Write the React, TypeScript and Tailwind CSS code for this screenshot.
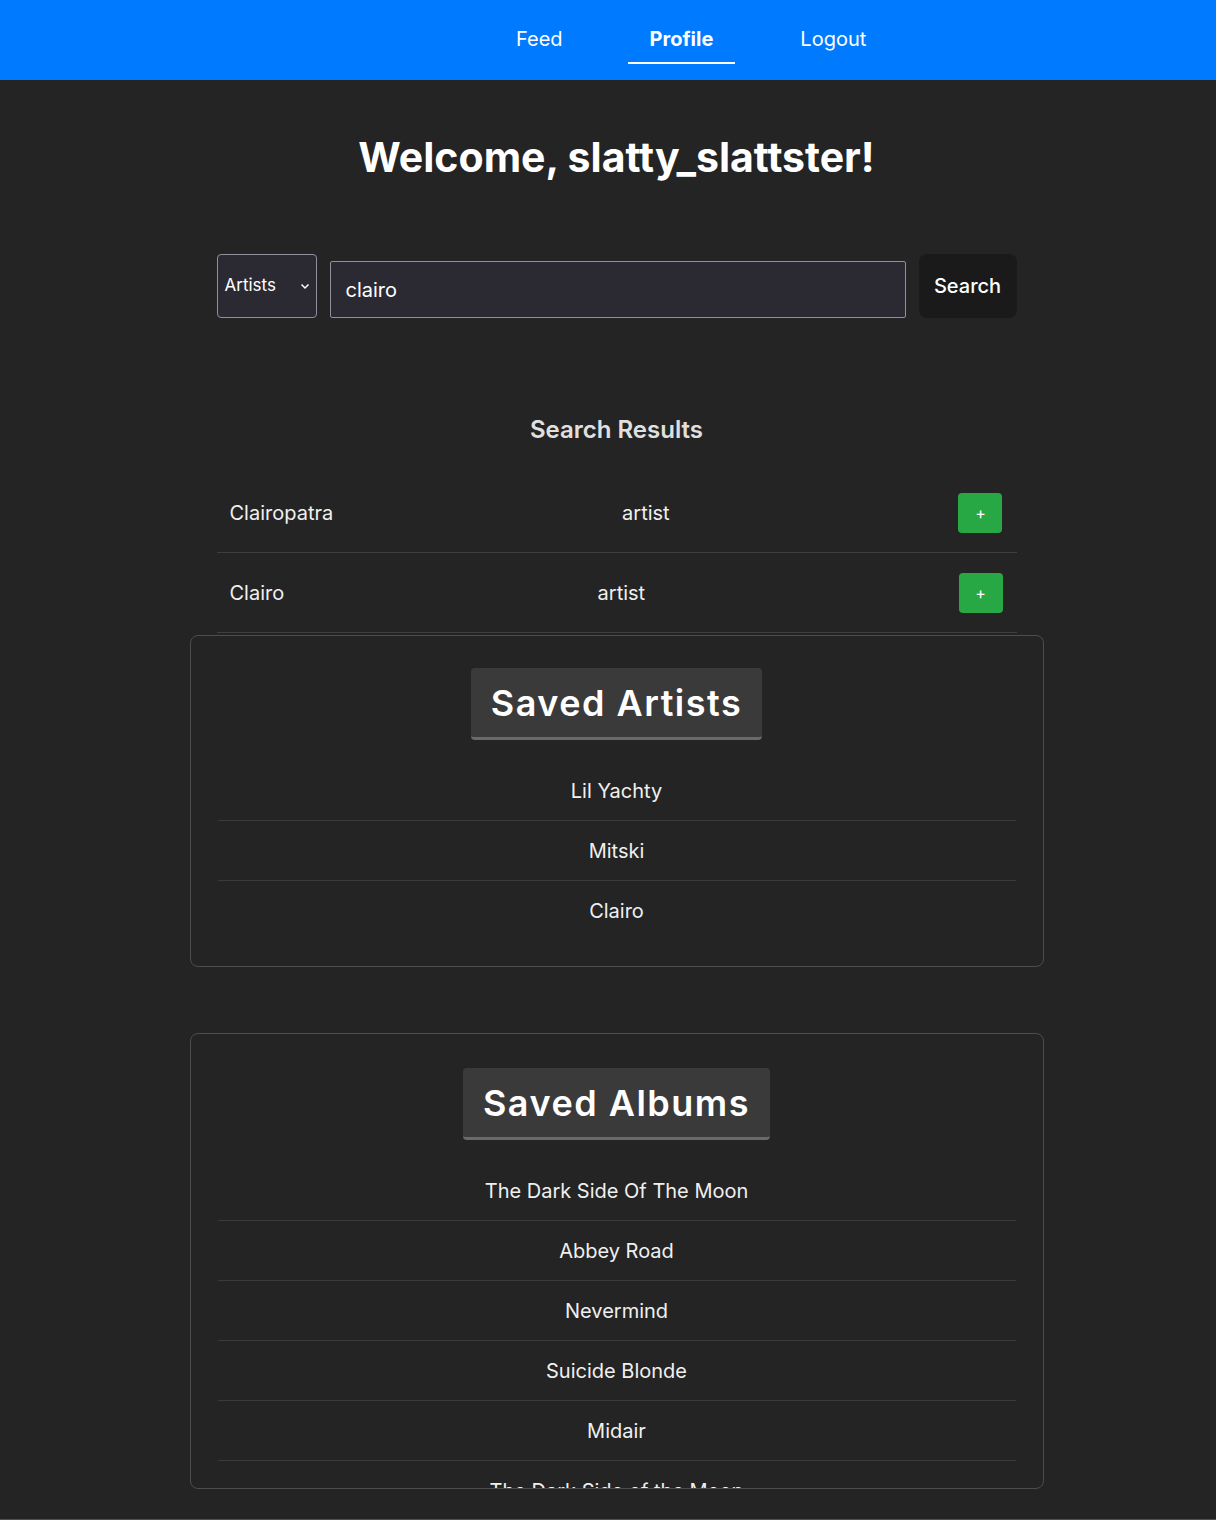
import { FC } from "react";

const results = [
  { name: "Clairopatra", type: "artist" },
  { name: "Clairo", type: "artist" },
];

const savedArtists = ["Lil Yachty", "Mitski", "Clairo"];

const savedAlbums = [
  "The Dark Side Of The Moon",
  "Abbey Road",
  "Nevermind",
  "Suicide Blonde",
  "Midair",
  "The Dark Side of the Moon",
  "Blonde",
];

const NavBar: FC = () => (
  <nav className="h-20 bg-[#007bff] flex items-start pt-4 pl-[494px] gap-[43px] text-[20px] text-white">
    <a className="h-12 px-[22px] flex items-center border-b-2 border-transparent">Feed</a>
    <a className="h-12 px-[22px] flex items-center border-b-2 border-white font-bold">Profile</a>
    <a className="h-12 px-[22px] flex items-center border-b-2 border-transparent">Logout</a>
  </nav>
);

const SavedCard: FC<{ title: string; items: string[]; extra?: string }> = ({ title, items, extra }) => (
  <section className={`w-[854px] mx-auto border border-[#4d4d4d] rounded-lg px-[27px] pt-[32px] pb-[26px] ${extra ?? ""}`}>
    <div className="flex justify-center">
      <h2 className="h-[72px] px-5 flex items-center bg-[#3a3a3a] rounded border-b-[3px] border-[#6a6a6a] text-[36px] font-semibold tracking-[1.5px] text-white">
        {title}
      </h2>
    </div>
    <ul className="mt-[21px]">
      {items.map((item, i) => (
        <li
          key={item + i}
          className={`h-[59px] flex items-center justify-center text-[20px] text-[#f0f0f0] ${
            i < items.length - 1 ? "border-b border-[#3b3b3b] box-content" : ""
          }`}
        >
          {item}
        </li>
      ))}
    </ul>
  </section>
);

export default function App() {
  return (
    <div className="min-h-[1520px] bg-[#242424] font-['Inter','Liberation_Sans',sans-serif] flex flex-col">
      <NavBar />

      <main className="flex-1 flex flex-col pl-[17px]">
        <h1 className="mt-[53px] text-center text-[41px] leading-[48px] font-bold text-white">
          Welcome, slatty_slattster!
        </h1>

        <div className="mt-[73px] w-[800px] mx-auto flex items-end gap-[13px]">
          <div className="w-[100px] h-16 border border-[#8f8f9d] rounded bg-[#2b2a33] flex items-center justify-between pl-[7px] pr-[5px] text-[17px] text-white">
            <span>Artists</span>
            <svg width="12" height="12" viewBox="0 0 12 12" fill="none" stroke="white" strokeWidth="1.5">
              <path d="M2.5 4.5 L6 8 L9.5 4.5" />
            </svg>
          </div>
          <div className="w-[576px] h-[57px] border border-[#8f8f9d] rounded-[2px] bg-[#2b2a33] flex items-center px-[15px] text-[20px] text-white">
            clairo
          </div>
          <button className="w-[98px] h-16 rounded-lg bg-[#1a1a1a] text-[20px] font-medium text-white">
            Search
          </button>
        </div>

        <h3 className="mt-[96px] text-center text-[24px] leading-8 font-semibold text-[#e0e0e0]">
          Search Results
        </h3>

        <div className="mt-[27px] w-[800px] mx-auto">
          {results.map((r) => (
            <div
              key={r.name}
              className="h-20 flex items-center justify-between pl-[13px] pr-[14px] border-b border-[#3e3e3e] text-[20px] text-[#f0f0f0]"
            >
              <span>{r.name}</span>
              <span>{r.type}</span>
              <button className="w-11 h-10 rounded bg-[#28a745] text-white text-[16px] flex items-center justify-center">
                +
              </button>
            </div>
          ))}
        </div>

        <div className="mt-[2px]">
          <SavedCard title="Saved Artists" items={savedArtists} />
        </div>

        <div className="mt-[66px] pb-[30px]">
          <SavedCard title="Saved Albums" items={savedAlbums} extra="h-[456px] overflow-hidden !pt-[34px]" />
        </div>
      </main>

      <div className="h-[2px] bg-[#505050]" />
    </div>
  );
}
